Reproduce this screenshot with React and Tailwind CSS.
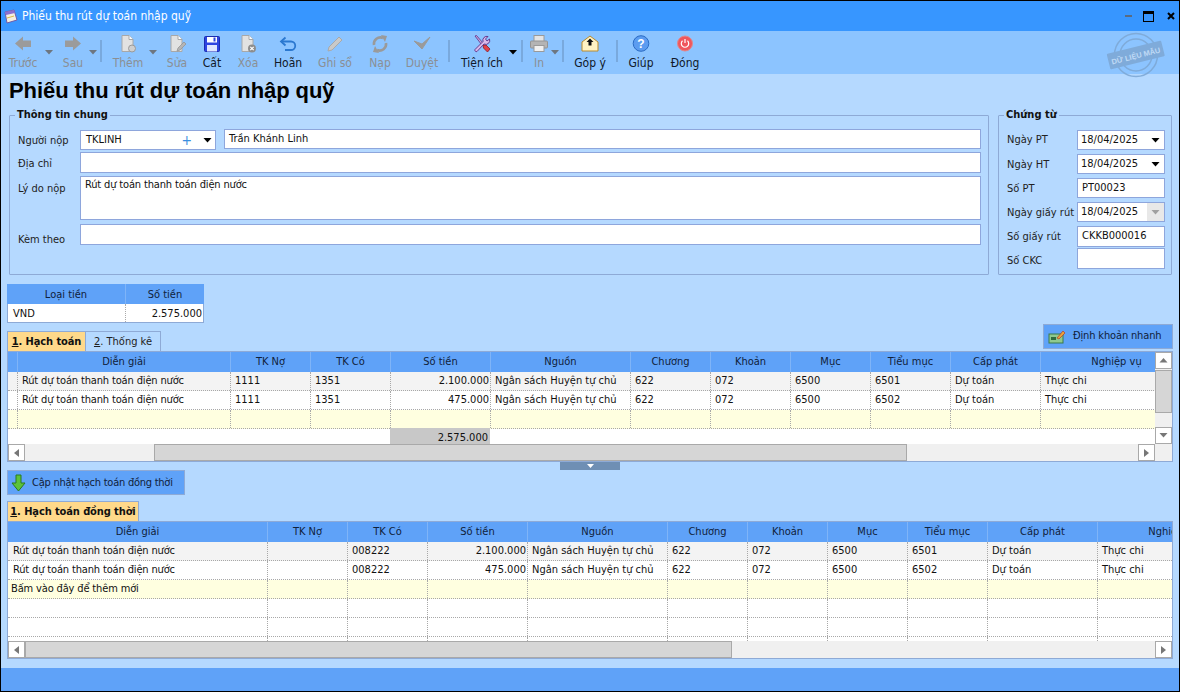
import React from "react";

const FONT = "font-['DejaVu_Sans_Condensed','Liberation_Sans',Arial,sans-serif]";

// --- small drawings ---
function Caret({ className = "fill-black", dir = "down", size = 9 }) {
  const pts = {
    down: "0,0 8,0 4,4.5",
    up: "0,4.5 8,4.5 4,0",
  };
  return (
    <svg width={size} height={5} viewBox="0 0 8 5" className={className}>
      <polygon points={pts[dir]} />
    </svg>
  );
}

function SideCaret({ dir }) {
  return (
    <svg width="5" height="8" viewBox="0 0 5 8" className="fill-[#777]">
      <polygon points={dir === "left" ? "5,0 5,8 0,4" : "0,0 0,8 5,4"} />
    </svg>
  );
}

function Ico({ children }) {
  return (
    <svg width="20" height="20" viewBox="0 0 20 20" className="block">
      {children}
    </svg>
  );
}

const IconBack = () => (
  <Ico>
    <polygon points="2,9.5 10,2.5 10,6.5 18,6.5 18,13 10,13 10,16.5" fill="#9b9b9b" />
  </Ico>
);
const IconNext = () => (
  <Ico>
    <polygon points="18,9.5 10,2.5 10,6.5 2,6.5 2,13 10,13 10,16.5" fill="#9b9b9b" />
  </Ico>
);
const Doc = () => (
  <path d="M4 1.5h7l4 4v12H4z" fill="#e2e2e2" stroke="#a8a8a8" strokeWidth="1" />
);
const IconAdd = () => (
  <Ico>
    <Doc />
    <path d="M11 1.5v4h4" fill="#fff" stroke="#a8a8a8" />
    <circle cx="14" cy="14.5" r="3.5" fill="#cfcfcf" stroke="#9a9a9a" />
  </Ico>
);
const IconEdit = () => (
  <Ico>
    <Doc />
    <path d="M11 1.5v4h4" fill="#fff" stroke="#a8a8a8" />
    <path d="M10 17l1-3 6-6 2 2-6 6z" fill="#b5b5b5" stroke="#8f8f8f" strokeWidth=".7" />
  </Ico>
);
const IconSave = () => (
  <Ico>
    <rect x="2.5" y="2.5" width="15" height="15" rx="1" fill="#2d44e0" stroke="#1b2cb0" />
    <rect x="5" y="3" width="10" height="5.5" fill="#fff" />
    <rect x="11.5" y="3.5" width="2" height="4" fill="#2d44e0" />
    <rect x="5" y="11" width="10" height="6.5" fill="#dfe6ff" />
  </Ico>
);
const IconDelete = () => (
  <Ico>
    <Doc />
    <path d="M11 1.5v4h4" fill="#fff" stroke="#a8a8a8" />
    <circle cx="14" cy="14.5" r="4" fill="#8d8d8d" />
    <path d="M12.3 12.8l3.4 3.4M15.7 12.8l-3.4 3.4" stroke="#fff" strokeWidth="1.2" />
  </Ico>
);
const IconUndo = () => (
  <Ico>
    <path d="M4 7.5h9a4 4 0 0 1 0 8.5H7" fill="none" stroke="#2b78d0" strokeWidth="1.8" />
    <path d="M7.5 3.5L3 7.5l4.5 4" fill="none" stroke="#2b78d0" strokeWidth="1.8" />
  </Ico>
);
const IconPencil = () => (
  <Ico>
    <path d="M3 17l1-4L14 3l3 3L7 16z" fill="#c9c9c9" stroke="#a9a9a9" />
  </Ico>
);
const IconReload = () => (
  <Ico>
    <path d="M4 11a6.5 6.5 0 0 1 9-7" fill="none" stroke="#9a9a9a" strokeWidth="2.6" />
    <path d="M16 9a6.5 6.5 0 0 1-9 7" fill="none" stroke="#9a9a9a" strokeWidth="2.6" />
    <polygon points="11,1 17,2 15,8" fill="#9a9a9a" />
    <polygon points="9,19 3,18 5,12" fill="#9a9a9a" />
  </Ico>
);
const IconCheck = () => (
  <Ico>
    <path d="M2 7l8 8L18 3l-8 7z" fill="#9a9a9a" stroke="#9a9a9a" strokeLinejoin="round" />
  </Ico>
);
const IconTools = () => (
  <Ico>
    <path d="M3 2l1.5-.5L11 9l-1.5 1.5z" fill="#c9a6dc" stroke="#5b2d86" strokeWidth=".8" />
    <path d="M11 11l3 0 4 4-2.5 3-4-4z" fill="#e0404a" stroke="#8e1a22" strokeWidth=".8" />
    <path d="M3 15.5L11 7.5a4 4 0 0 1 5-5l-2.5 2.5 1.5 2 2.5-2a4 4 0 0 1-5.5 5L5 17.5a1.5 1.5 0 0 1-2-2z" fill="#d9b9ea" stroke="#5b2d86" strokeWidth=".9" />
  </Ico>
);
const IconPrint = () => (
  <Ico>
    <rect x="5" y="1.5" width="10" height="6" fill="#e4e4e4" stroke="#9a9a9a" />
    <rect x="1.5" y="7" width="17" height="7" rx="1" fill="#b4b4b4" stroke="#949494" />
    <rect x="5" y="11.5" width="10" height="6" fill="#f0f0f0" stroke="#9a9a9a" />
  </Ico>
);
const IconMail = () => (
  <Ico>
    <path d="M2 8l8-6 8 6v9H2z" fill="#fff3c4" stroke="#b98a2c" strokeWidth="1" />
    <path d="M10 4.5l3.5 3.5h-2v3.5h-3V8h-2z" fill="#111" />
  </Ico>
);
const IconHelp = () => (
  <Ico>
    <circle cx="10" cy="9.5" r="7.8" fill="#5c9cf0" stroke="#2b6cc4" />
    <text x="10" y="14" textAnchor="middle" fontSize="12" fontWeight="700" fill="#fff" fontFamily="Liberation Sans">?</text>
  </Ico>
);
const IconPower = () => (
  <Ico>
    <circle cx="10" cy="9.5" r="7.5" fill="#f0565c" stroke="#e0888c" />
    <path d="M7.5 6.8a3.7 3.7 0 1 0 5 0" fill="none" stroke="#fff" strokeWidth="1.2" />
    <path d="M10 5v4" stroke="#fff" strokeWidth="1.2" />
  </Ico>
);

// --- toolbar ---
function ToolButton({ icon, label, disabled, className = "" }) {
  return (
    <div className={`flex flex-col items-center shrink-0 ${className}`}>
      <div className="h-[20px] mt-[3px]">{icon}</div>
      <div className={`mt-[2px] text-[12px] leading-[15px] whitespace-nowrap ${disabled ? "text-[#8b8f94]" : "text-[#101828]"}`}>
        {label}
      </div>
    </div>
  );
}

function ToolArrow({ disabled, className = "" }) {
  return (
    <div className={`w-[8px] shrink-0 flex justify-center pt-[19px] ${className}`}>
      <Caret size={8} className={disabled ? "fill-[#6d7680]" : "fill-black"} />
    </div>
  );
}

function ToolSep({ className = "" }) {
  return <div className={`w-[2px] h-[22px] mt-[9px] shrink-0 bg-[#79a9dd] ${className}`} />;
}

function Stamp() {
  return (
    <svg width="60" height="48" viewBox="0 0 60 48" className="absolute left-[1105px] top-[1px] opacity-90">
      <circle cx="30" cy="23" r="21.5" fill="none" stroke="#7ea9d6" strokeWidth="1.5" />
      <circle cx="30" cy="23" r="16" fill="none" stroke="#7ea9d6" strokeWidth="1.5" />
      <g transform="rotate(-14 30 24)">
        <rect x="2" y="15" width="56" height="16" rx="1" fill="#7ea9d6" />
        <text x="30" y="26.5" textAnchor="middle" fontSize="7.5" fontWeight="700" fill="#c4dcf5" fontFamily="Liberation Sans">DỮ LIỆU MẪU</text>
      </g>
    </svg>
  );
}

function Toolbar() {
  return (
    <div className="relative h-[43px] flex bg-[#8cc4ff] shrink-0">
      <ToolButton icon={<IconBack />} label="Trước" disabled className="w-[44px]" />
      <ToolArrow disabled />
      <ToolButton icon={<IconNext />} label="Sau" disabled className="w-[32px] ml-[4px]" />
      <ToolArrow disabled />
      <ToolSep className="ml-[3px]" />
      <ToolButton icon={<IconAdd />} label="Thêm" disabled className="w-[40px] ml-[6px]" />
      <ToolArrow disabled className="ml-[1px]" />
      <ToolButton icon={<IconEdit />} label="Sửa" disabled className="w-[30px] ml-[5px]" />
      <ToolButton icon={<IconSave />} label="Cất" className="w-[30px] ml-[5px]" />
      <ToolButton icon={<IconDelete />} label="Xóa" disabled className="w-[30px] ml-[6px]" />
      <ToolButton icon={<IconUndo />} label="Hoãn" className="w-[36px] ml-[7px]" />
      <ToolButton icon={<IconPencil />} label="Ghi sổ" disabled className="w-[40px] ml-[9px]" />
      <ToolButton icon={<IconReload />} label="Nạp" disabled className="w-[36px] ml-[7px]" />
      <ToolButton icon={<IconCheck />} label="Duyệt" disabled className="w-[40px] ml-[4px]" />
      <ToolSep className="ml-[6px]" />
      <ToolButton icon={<IconTools />} label="Tiện ích" className="w-[48px] ml-[8px]" />
      <ToolArrow className="ml-[3px]" />
      <ToolSep className="ml-[4px]" />
      <ToolButton icon={<IconPrint />} label="In" disabled className="w-[24px] ml-[4px]" />
      <ToolArrow disabled />
      <ToolSep className="ml-[3px]" />
      <ToolButton icon={<IconMail />} label="Góp ý" className="w-[40px] ml-[6px]" />
      <ToolSep className="ml-[6px]" />
      <ToolButton icon={<IconHelp />} label="Giúp" className="w-[36px] ml-[5px]" />
      <ToolButton icon={<IconPower />} label="Đóng" className="w-[40px] ml-[6px]" />
      <Stamp />
    </div>
  );
}

// --- form ---
const inputCls = "bg-white border border-[#8ea6dc] text-[11px] text-[#111] px-[4px] flex items-center";
const labelCls = "text-[11px] leading-[14px] text-[#222] whitespace-nowrap";

function Field({ className = "", children }) {
  return <div className={`${inputCls} ${className}`}>{children}</div>;
}

function DateBox({ value, className = "", disabled }) {
  return (
    <div className={`${inputCls} !pr-0 !pl-[3px] w-[88px] ${className}`}>
      <span className="flex-1">{value}</span>
      {disabled ? (
        <span className="w-[17px] self-stretch bg-[#e8e8e8] flex items-center justify-center">
          <Caret className="fill-[#a0a0a0]" />
        </span>
      ) : (
        <span className="w-[17px] flex items-center justify-center">
          <Caret />
        </span>
      )}
    </div>
  );
}

function Group({ title, className = "", children }) {
  return (
    <fieldset className={`border border-[#8eaad6] rounded-[1px] ${className}`}>
      <legend className="-ml-[3px] px-[2px] text-[11px] leading-[14px] font-bold text-[#111]">{title}</legend>
      {children}
    </fieldset>
  );
}

function InfoGroup() {
  return (
    <Group title="Thông tin chung" className="w-[980px] h-[167px] ml-[2px] pl-[8px] pr-[7px]">
      <div className="flex mt-[8px] h-[20px]">
        <div className={`w-[62px] pt-[4px] ${labelCls}`}>Người nộp</div>
        <Field className="w-[136px] h-[20px] !pr-0 !pl-[5px]">
          <span className="flex-1">TKLINH</span>
          <span className="text-[#3a8fe0] text-[14px] leading-none mr-[11px]">+</span>
          <span className="mr-[3px] flex"><Caret /></span>
        </Field>
        <Field className="flex-1 ml-[8px] h-[20px] -mt-[1px]">Trần Khánh Linh</Field>
      </div>
      <div className="flex mt-[2px] h-[21px]">
        <div className={`w-[62px] pt-[5px] ${labelCls}`}>Địa chỉ</div>
        <Field className="flex-1 h-[21px]" />
      </div>
      <div className="flex mt-[3px] h-[44px]">
        <div className={`w-[62px] pt-[6px] ${labelCls}`}>Lý do nộp</div>
        <Field className="flex-1 h-[44px] !items-start tracking-[-0.15px]">Rút dự toán thanh toán điện nước</Field>
      </div>
      <div className="flex mt-[4px] h-[21px]">
        <div className={`w-[62px] pt-[9px] ${labelCls}`}>Kèm theo</div>
        <Field className="flex-1 h-[21px]" />
      </div>
    </Group>
  );
}

function VoucherRow({ label, className = "", labelClass = "pt-[4px]", children }) {
  return (
    <div className={`flex items-start ${className}`}>
      <div className={`w-[70px] ${labelCls} ${labelClass}`}>{label}</div>
      {children}
    </div>
  );
}

function VoucherGroup() {
  return (
    <Group title="Chứng từ" className="w-[174px] h-[167px] ml-[9px] pl-[8px]">
      <VoucherRow label="Ngày PT" labelClass="pt-[3px]" className="mt-[8px]"><DateBox value="18/04/2025" className="h-[20px]" /></VoucherRow>
      <VoucherRow label="Ngày HT" className="mt-[4px]"><DateBox value="18/04/2025" className="h-[20px]" /></VoucherRow>
      <VoucherRow label="Số PT" className="mt-[4px]"><Field className="w-[88px] h-[20px]">PT00023</Field></VoucherRow>
      <VoucherRow label="Ngày giấy rút" className="mt-[4px]"><DateBox value="18/04/2025" disabled className="h-[20px]" /></VoucherRow>
      <VoucherRow label="Số giấy rút" className="mt-[4px]"><Field className="w-[88px] h-[21px]">CKKB000016</Field></VoucherRow>
      <VoucherRow label="Số CKC" labelClass="pt-[6px]" className="mt-[1px]"><Field className="w-[88px] h-[21px]" /></VoucherRow>
    </Group>
  );
}

function Currency() {
  return (
    <div className="w-[197px] mt-[9px] text-[11px] text-[#111]">
      <div className="flex h-[20px] bg-[#5fa2f8] text-[#10213a]">
        <div className="w-[119px] pt-[2px] flex items-center justify-center border-r border-[#7fb4f8]">Loại tiền</div>
        <div className="flex-1 pt-[2px] flex items-center justify-center">Số tiền</div>
      </div>
      <div className="flex h-[19px] bg-white border-x border-b border-[#8eaad6]">
        <div className="w-[118px] px-[5px] pt-[2px] flex items-center border-r border-dotted border-[#aaa]">VND</div>
        <div className="flex-1 pr-[1px] pt-[2px] flex items-center justify-end">2.575.000</div>
      </div>
    </div>
  );
}

// --- grids ---
function Tab({ no, label, active, className = "" }) {
  return (
    <div className={`h-[20px] pt-[1px] flex items-center justify-center border border-b-0 border-[#8eaad6] text-[11px] text-[#111] whitespace-nowrap ${active ? "bg-[#ffd98a] font-bold tracking-[-0.1px]" : "text-[#222]"} ${className}`}>
      <span><u>{no}</u>. {label}</span>
    </div>
  );
}

function ScrollBtn({ children, className = "" }) {
  return (
    <div className={`bg-white border border-[#a9a9a9] flex items-center justify-center shrink-0 ${className}`}>{children}</div>
  );
}

const ROW_BG = ["bg-[#f3f3f3]", "bg-white", "bg-[#ffffe0]", "bg-white", "bg-white", "bg-white"];

function GridHeader({ grid, cols }) {
  return (
    <div className={`grid ${grid} h-[20px] bg-[#5fa2f8] text-[11px] text-[#10213a]`}>
      {cols.map((c, i) => (
        <div key={i} className="pt-[1px] flex items-center justify-center border-r border-[#7fb4f8] whitespace-nowrap">{c}</div>
      ))}
    </div>
  );
}

function GridRow({ grid, cells, bg, rightIdx, noteIdx, notePad = "pl-[4px]" }) {
  return (
    <div className={`grid ${grid} h-[19px] ${bg} text-[11px] text-[#111] border-b border-dotted border-[#a8a8a8]`}>
      {cells.map((c, i) => {
        let align = "pl-[4px]";
        if (i === rightIdx) align = "justify-end pr-[1px]";
        else if (i === noteIdx) align = `${notePad} tracking-[-0.15px]`;
        return (
          <div key={i} className={`flex items-center whitespace-nowrap border-r border-dotted border-[#a8a8a8] ${c === "" ? "" : align}`}>
            {c}
          </div>
        );
      })}
    </div>
  );
}

const GRID1 = "grid-cols-[10px_213px_80px_80px_100px_140px_80px_80px_80px_80px_90px_152px]";
const COLS1 = ["", "Diễn giải", "TK Nợ", "TK Có", "Số tiền", "Nguồn", "Chương", "Khoản", "Mục", "Tiểu mục", "Cấp phát", "Nghiệp vụ"];
const ROWS1 = [
  ["", "Rút dự toán thanh toán điện nước", "1111", "1351", "2.100.000", "Ngân sách Huyện tự chủ", "622", "072", "6500", "6501", "Dự toán", "Thực chi"],
  ["", "Rút dự toán thanh toán điện nước", "1111", "1351", "475.000", "Ngân sách Huyện tự chủ", "622", "072", "6500", "6502", "Dự toán", "Thực chi"],
  ["", "", "", "", "", "", "", "", "", "", "", ""],
];

function PostingGrid() {
  return (
    <div className="h-[111px] border border-[#8eaad6] flex flex-col bg-white">
      <div className="flex flex-1 min-h-0">
        <div className="w-[1147px] overflow-hidden flex flex-col">
          <div className="w-[1300px]">
            <GridHeader grid={GRID1} cols={COLS1} />
            {ROWS1.map((r, i) => (
              <GridRow key={i} grid={GRID1} cells={r} bg={ROW_BG[i]} rightIdx={4} noteIdx={1} />
            ))}
          </div>
          <div className="h-[1px] bg-[#b6cbe6] -mt-[1px]" />
          <div className="flex flex-1">
            <div className="w-[382px]" />
            <div className="w-[100px] pt-[2px] bg-[#c8c8c8] flex items-center justify-end pr-[2px] text-[11px] text-[#111]">2.575.000</div>
          </div>
        </div>
        <div className="w-[17px] bg-[#f0f0f0] flex flex-col">
          <ScrollBtn className="h-[17px]"><Caret dir="up" className="fill-[#777]" /></ScrollBtn>
          <div className="h-[43px] mt-[1px] bg-[#d6d6d6] border border-[#a9a9a9]" />
          <div className="flex-1" />
          <ScrollBtn className="h-[17px]"><Caret className="fill-[#777]" /></ScrollBtn>
        </div>
      </div>
      <div className="h-[17px] flex bg-[#f0f0f0]">
        <ScrollBtn className="w-[17px]"><SideCaret dir="left" /></ScrollBtn>
        <div className="w-[129px]" />
        <div className="w-[753px] bg-[#d6d6d6] border border-[#a9a9a9]" />
        <div className="w-[231px]" />
        <ScrollBtn className="w-[17px]"><SideCaret dir="right" /></ScrollBtn>
      </div>
    </div>
  );
}

const GRID2 = "grid-cols-[260px_80px_80px_100px_140px_80px_80px_80px_80px_110px_152px]";
const COLS2 = ["Diễn giải", "TK Nợ", "TK Có", "Số tiền", "Nguồn", "Chương", "Khoản", "Mục", "Tiểu mục", "Cấp phát", "Nghiệp vụ"];
const ROWS2 = [
  ["Rút dự toán thanh toán điện nước", "", "008222", "2.100.000", "Ngân sách Huyện tự chủ", "622", "072", "6500", "6501", "Dự toán", "Thực chi"],
  ["Rút dự toán thanh toán điện nước", "", "008222", "475.000", "Ngân sách Huyện tự chủ", "622", "072", "6500", "6502", "Dự toán", "Thực chi"],
  ["Bấm vào đây để thêm mới", "", "", "", "", "", "", "", "", "", ""],
  ["", "", "", "", "", "", "", "", "", "", ""],
  ["", "", "", "", "", "", "", "", "", "", ""],
  ["", "", "", "", "", "", "", "", "", "", ""],
];

function ConcurrentGrid() {
  return (
    <div className="h-[138px] border border-[#8eaad6] flex flex-col bg-white">
      <div className="h-[119px] overflow-hidden">
        <div className="w-[1300px]">
          <GridHeader grid={GRID2} cols={COLS2} />
          {ROWS2.map((r, i) => (
            <GridRow key={i} grid={GRID2} cells={r} bg={ROW_BG[i]} rightIdx={3} noteIdx={0} notePad={i === 2 ? "pl-[3px]" : "pl-[5px]"} />
          ))}
        </div>
      </div>
      <div className="h-[17px] flex bg-[#f0f0f0]">
        <ScrollBtn className="w-[17px]"><SideCaret dir="left" /></ScrollBtn>
        <div className="w-[707px] bg-[#d6d6d6] border border-[#a9a9a9]" />
        <div className="flex-1" />
        <ScrollBtn className="w-[17px]"><SideCaret dir="right" /></ScrollBtn>
      </div>
    </div>
  );
}

export default function App() {
  return (
    <div className={`w-[1180px] h-[692px] flex flex-col border border-black overflow-hidden bg-[#b5d9ff] ${FONT}`}>
      {/* title bar */}
      <div className="h-[30px] shrink-0 bg-[#3796ff] flex items-center text-white">
        <svg width="15" height="15" viewBox="0 0 15 15" className="ml-[2px]">
          <path d="M2 3l9-2 3 10-10 3z" fill="#f4efe0" stroke="#6f5aa8" />
          <path d="M2 3l9-2 1 3-9 2z" fill="#8a6fd0" />
          <path d="M4 9l7-2" stroke="#d9b94a" />
        </svg>
        <div className="ml-[4px] text-[12px]">Phiếu thu rút dự toán nhập quỹ</div>
        <div className="ml-auto flex items-center">
          <div className="w-[7px] h-[2px] bg-[#5a6b80]" />
          <div className="w-[11px] h-[11px] ml-[11px] border border-black border-t-[3px]" />
          <svg width="8" height="8" viewBox="0 0 8 8" className="ml-[13px] mr-[4px]">
            <path d="M1 1l6 6M7 1L1 7" stroke="#000" strokeWidth="2" />
          </svg>
        </div>
      </div>

      <Toolbar />

      <main className="flex-1 min-h-0 px-[6px] flex flex-col">
        <h1 className="h-[34px] shrink-0 ml-[2px] font-['Liberation_Sans',Arial,sans-serif] text-[22px] leading-[34px] font-bold tracking-[-0.07px] text-black whitespace-nowrap">
          Phiếu thu rút dự toán nhập quỹ
        </h1>
        <div className="flex">
          <InfoGroup />
          <VoucherGroup />
        </div>

        <Currency />

        <div className="flex h-[28px] items-end">
          <Tab no="1" label="Hạch toán" active className="w-[79px]" />
          <Tab no="2" label="Thống kê" className="w-[76px] -ml-[1px]" />
          <div className="ml-auto self-start mt-[1px] h-[25px] w-[130px] bg-[#5fa2f8] border border-[#8eaad6] flex items-center text-[11px] text-[#10213a]">
            <svg width="18" height="16" viewBox="0 0 18 16" className="ml-[4px]">
              <rect x="1" y="5" width="14" height="9" fill="#8fc98f" stroke="#3a7a4a" />
              <rect x="3" y="8" width="5" height="3" fill="#2f6b3f" />
              <path d="M9 9l6-7 2 2-6 6z" fill="#e8a33a" stroke="#b0392c" strokeWidth=".7" />
            </svg>
            <span className="ml-[7px] whitespace-nowrap tracking-[-0.15px]">Định khoản nhanh</span>
          </div>
        </div>

        <PostingGrid />

        <div className="h-[8px] flex justify-center">
          <div className="w-[60px] h-[8px] bg-[#6f8fb4] flex items-center justify-center">
            <svg width="7" height="4" viewBox="0 0 7 4" className="fill-white"><polygon points="0,0 7,0 3.5,4" /></svg>
          </div>
        </div>

        <div className="w-[178px] h-[25px] pt-[1px] bg-[#5fa2f8] border border-[#8eaad6] flex items-center text-[11px] text-[#10213a]">
          <svg width="18" height="18" viewBox="0 0 18 18" className="ml-[2px]">
            <path d="M6 1h5v8h4l-6.5 8L2 9h4z" fill="#5cc23a" stroke="#2a7a1e" />
          </svg>
          <span className="ml-[4px] whitespace-nowrap tracking-[-0.25px]">Cập nhật hạch toán đồng thời</span>
        </div>

        <Tab no="1" label="Hạch toán đồng thời" active className="w-[132px] mt-[6px]" />
        <ConcurrentGrid />
      </main>

      {/* status bar */}
      <div className="h-[23px] shrink-0 bg-[#5fa2f8]" />
    </div>
  );
}
